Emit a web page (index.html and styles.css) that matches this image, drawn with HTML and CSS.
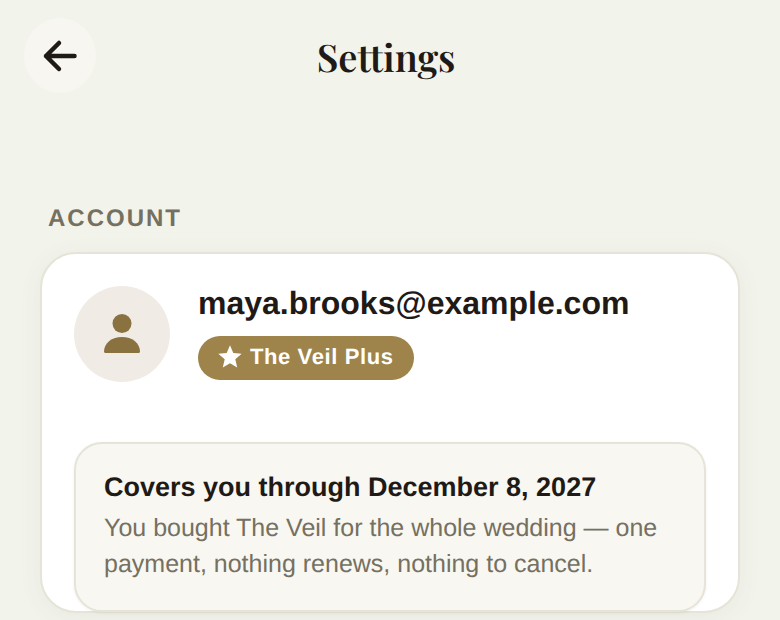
FILE: index.html
```html
<!DOCTYPE html>
<html>
    <head>
        <link rel="stylesheet" href="styles.css">
    </head>
    <body>
        <div class = "topbar">
            <button class = "back-btn">
                <svg width = "40" height = "40" viewBox = "0 0 40 40" fill = "none" stroke = "#1f1a15" stroke-width = "4.500" stroke-linecap = "round" stroke-linejoin = "round">
                    <path d = "M34.500 20H6M19 7L6 20L19 33"/>
                </svg>
            </button>
            <h1 class = "page-title">Settings</h1>
        </div>
        <h2 class = "section-label">ACCOUNT</h2>
        <div class = "card">
            <div class = "account-row">
                <div class = "avatar">
                    <svg width = "40" height = "42" viewBox = "0 0 40 42" fill = "#8a7240">
                        <circle cx = "20" cy = "10.500" r = "9.500"/>
                        <path d = "M2 38.500C2 30 10 24 20 24C30 24 38 30 38 38.500C38 39.500 37 40 36 40H4C3 40 2 39.500 2 38.500Z"/>
                    </svg>
                </div>
                <div class = "account-info">
                    <div class = "email">maya.brooks@example.com</div>
                    <div class = "plan-badge">
                        <svg width = "28" height = "28" viewBox = "0 0 24 24" fill = "#fff">
                            <path d = "M12 17.270L18.180 21L16.540 13.970L22 9.240L14.810 8.630L12 2L9.190 8.630L2 9.240L7.460 13.970L5.820 21Z"/>
                        </svg>
                        The Veil Plus
                    </div>
                </div>
            </div>
            <div class = "coverage">
                <div class = "coverage-title">Covers you through December 8, 2027</div>
                <p class = "coverage-text">You bought The Veil for the whole wedding — one payment, nothing renews, nothing to cancel.</p>
            </div>
        </div>
    </body>
</html>
```

FILE: styles.css
```css
html, body {
    height: 100%;
}
body {
    margin: 0;
    padding: 18px 40px 0;
    box-sizing: border-box;
    overflow: hidden;
    font-family: "Liberation Sans", Arial, sans-serif;
    color: #1f1a15;
    background-color: #f2f3eb;
    text-rendering: geometricPrecision;
}
.topbar {
    position: relative;
    display: flex;
    justify-content: center;
    align-items: center;
    height: 76px;
    margin: 0 0 0 -16px;
    padding-left: 8px;
}
.back-btn {
    position: absolute;
    left: 0;
    top: 0;
    display: flex;
    align-items: center;
    justify-content: center;
    width: 72px;
    height: 75px;
    padding: 0;
    border: none;
    border-radius: 50%;
    background-color: #f7f6f1;
}
.page-title {
    margin: 0;
    font-family: "Playfair Display", "Liberation Serif", serif;
    font-size: 38px;
    font-weight: 600;
}
.section-label {
    margin: 111px 0 19px 8px;
    font-size: 24px;
    line-height: 28px;
    font-weight: 700;
    letter-spacing: 2px;
    color: #75705f;
}
.card {
    box-sizing: border-box;
    width: 700px;
    height: 361px;
    padding: 32px 32px 0;
    border: 2px solid #e6e4d8;
    border-radius: 36px;
    background-color: #fff;
    box-shadow: 0 4px 24px rgba(90, 80, 50, 0.06);
}
.account-row {
    display: flex;
    gap: 28px;
    height: 96px;
}
.avatar {
    display: flex;
    align-items: center;
    justify-content: center;
    flex: none;
    width: 96px;
    height: 96px;
    border-radius: 50%;
    background-color: #f0ebe5;
}
.email {
    font-size: 32px;
    line-height: 34px;
    font-weight: 700;
}
.plan-badge {
    display: inline-flex;
    align-items: center;
    gap: 6px;
    box-sizing: border-box;
    height: 44px;
    margin-top: 16px;
    padding: 0 20px 2px 18px;
    border-radius: 22px;
    font-size: 22px;
    font-weight: 700;
    letter-spacing: 0.600px;
    color: #fff;
    background-color: #9e844b;
}
.coverage {
    box-sizing: border-box;
    height: 170px;
    margin-top: 60px;
    padding: 27px 28px 0;
    border: 2px solid #e6e4d8;
    border-radius: 28px;
    background-color: #f8f7f2;
    box-shadow: 0 1px 3px rgba(90, 80, 50, 0.08);
}
.coverage-title {
    font-size: 27px;
    line-height: 32px;
    font-weight: 700;
}
.coverage-text {
    margin: 7px 0 0;
    font-size: 25px;
    line-height: 36px;
    color: #75705f;
}
```
